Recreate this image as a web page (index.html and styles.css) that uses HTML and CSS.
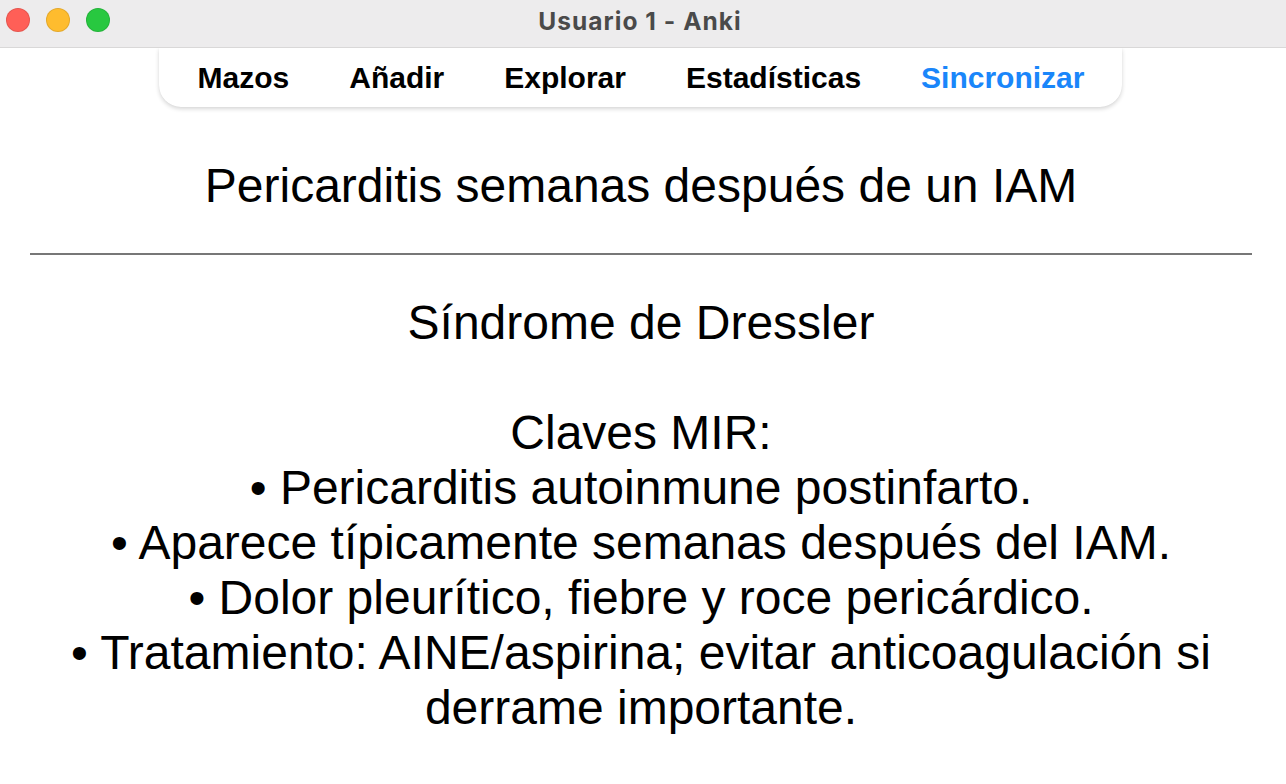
FILE: index.html
```html
<!DOCTYPE html>
<html lang="es">
<head>
<meta charset="utf-8">
<title>Usuario 1 - Anki</title>
<link rel="stylesheet" href="styles.css">
</head>
<body>
<div class="window">
  <header class="titlebar">
    <div class="lights">
      <span class="light red"></span>
      <span class="light yellow"></span>
      <span class="light green"></span>
    </div>
    <div class="title">Usuario 1 - Anki</div>
  </header>
  <div class="toolbar-row">
    <nav class="toolbar">
      <a class="tab">Mazos</a>
      <a class="tab">Añadir</a>
      <a class="tab">Explorar</a>
      <a class="tab">Estadísticas</a>
      <a class="tab sync">Sincronizar</a>
    </nav>
  </div>
  <main class="card">
    <div class="front">Pericarditis semanas después de un IAM</div>
    <hr class="answer">
    <div class="back">Síndrome de Dressler<br><br>Claves MIR:<br>• Pericarditis autoinmune postinfarto.<br>• Aparece típicamente semanas después del IAM.<br>• Dolor pleurítico, fiebre y roce pericárdico.<br>• Tratamiento: AINE/aspirina; evitar anticoagulación si derrame importante.</div>
  </main>
</div>
</body>
</html>
```
FILE: styles.css
```css
html, body {
  margin: 0;
  padding: 0;
  background: #ffffff;
}
.window {
  width: 1286px;
  height: 784px;
  overflow: hidden;
  background: #ffffff;
  font-family: "Liberation Sans", Arial, sans-serif;
}
.titlebar {
  height: 47px;
  border-bottom: 1px solid #d9d8d8;
  background: #edeced;
  display: grid;
  grid-template-columns: 1fr;
  align-items: center;
  position: relative;
}
.lights {
  position: absolute;
  left: 6px;
  top: 8px;
  display: flex;
  gap: 16px;
}
.light {
  box-sizing: border-box;
  width: 24px;
  height: 24px;
  border-radius: 50%;
  display: block;
  border: 1px solid rgba(0,0,0,0.1);
}
.red { background: #ff5f57; }
.yellow { background: #febc2e; }
.green { background: #28c840; }
.title {
  text-align: center;
  font-family: Inter, "Liberation Sans", sans-serif;
  font-weight: 700;
  font-size: 24.5px;
  letter-spacing: 1.05px;
  color: #4a4a4a;
  padding-bottom: 5px;
  padding-right: 6px;
}
.toolbar-row {
  display: flex;
  justify-content: center;
}
.toolbar {
  display: flex;
  align-items: center;
  height: 59px;
  padding: 0 8px 0 9px;
  margin-right: 5px;
  background: #ffffff;
  border-radius: 0 0 22px 22px;
  box-shadow: 0 2px 4px rgba(0,0,0,0.16), 0 0 1px rgba(0,0,0,0.08);
}
.tab {
  font-weight: 700;
  font-size: 30px;
  color: #000000;
  padding: 0 30px;
  padding-top: 1px;
}
.sync {
  color: #1a86fa;
}
.card {
  padding: 51px 34px 0 30px;
  text-align: center;
  font-size: 48px;
  color: #000000;
}
.front {
  line-height: 55px;
}
.answer {
  margin: 40px 0;
  border: 0;
  height: 2px;
  background: #777777;
}
.back {
  line-height: 55px;
}
```
